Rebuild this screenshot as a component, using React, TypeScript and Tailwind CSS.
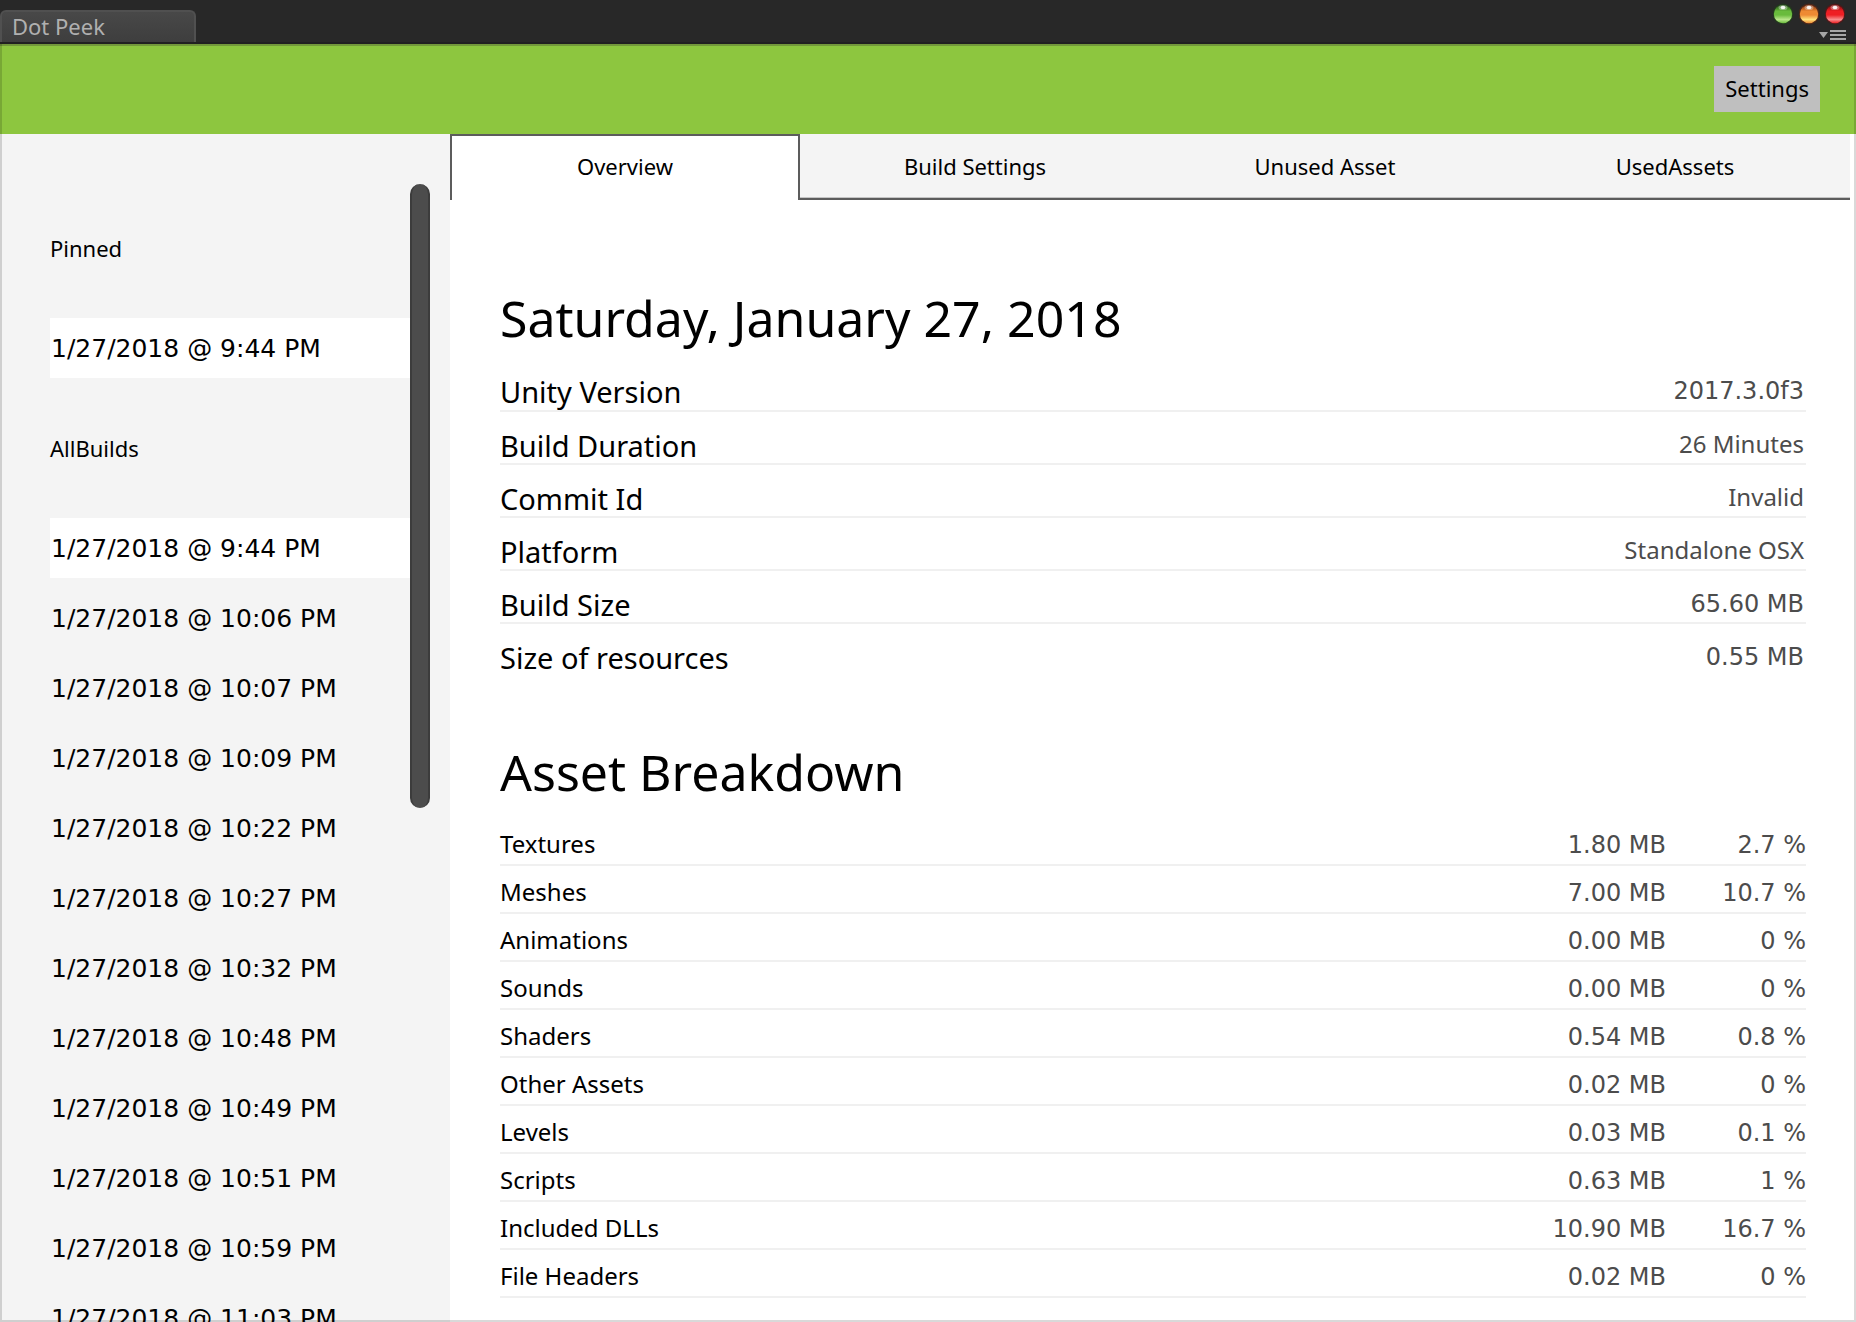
import React from "react";

const builds = ["9:44", "10:06", "10:07", "10:09", "10:22", "10:27", "10:32", "10:48", "10:49", "10:51", "10:59", "11:03"];

const tabs = ["Overview", "Build Settings", "Unused Asset", "UsedAssets"];

const info = [
  { label: "Unity Version", value: "2017.3.0f3", numeric: true },
  { label: "Build Duration", value: "26 Minutes", numeric: false },
  { label: "Commit Id", value: "Invalid", numeric: false },
  { label: "Platform", value: "Standalone OSX", numeric: false },
  { label: "Build Size", value: "65.60 MB", numeric: true },
  { label: "Size of resources", value: "0.55 MB", numeric: true },
];

const assets = [
  ["Textures", "1.80 MB", "2.7 %"],
  ["Meshes", "7.00 MB", "10.7 %"],
  ["Animations", "0.00 MB", "0 %"],
  ["Sounds", "0.00 MB", "0 %"],
  ["Shaders", "0.54 MB", "0.8 %"],
  ["Other Assets", "0.02 MB", "0 %"],
  ["Levels", "0.03 MB", "0.1 %"],
  ["Scripts", "0.63 MB", "1 %"],
  ["Included DLLs", "10.90 MB", "16.7 %"],
  ["File Headers", "0.02 MB", "0 %"],
];

function Orb({ id, rim, body, glow, label }: { id: string; rim: string; body: string; glow: string; label: string }) {
  return (
    <button type="button" aria-label={label} className="block">
      <svg width="20" height="22" viewBox="0 0 20 22" className="block">
        <defs>
          <linearGradient id={id} x1="0" y1="0" x2="0" y2="1">
            <stop offset="0" stopColor={rim} />
            <stop offset="0.35" stopColor={body} />
            <stop offset="0.55" stopColor={body} />
            <stop offset="0.8" stopColor={glow} />
            <stop offset="1" stopColor={body} />
          </linearGradient>
        </defs>
        <circle cx="10" cy="11" r="10.5" fill={rim} opacity="0.45" />
        <circle cx="10" cy="11" r="9.2" fill={`url(#${id})`} />
        <ellipse cx="10" cy="4.5" rx="4.5" ry="2.6" fill="#fff" opacity="0.35" />
        <ellipse cx="10" cy="4.5" rx="2.4" ry="1.7" fill="#fff" opacity="0.9" />
      </svg>
    </button>
  );
}

function BuildItem({ time, selected }: { time: string; selected: boolean }) {
  return (
    <li>
      <button
        type="button"
        className={`block h-[60px] w-full pt-0.5 pl-px text-left font-['DejaVu_Sans',sans-serif] text-[25px] whitespace-nowrap ${
          selected ? "bg-white" : ""
        }`}
      >
        1/27/2018 @ {time} PM
      </button>
    </li>
  );
}

export default function App() {
  return (
    <div className="relative flex h-screen flex-col overflow-hidden bg-white font-['Noto_Sans',sans-serif] text-black">
      <div className="flex h-11 shrink-0 items-end justify-between border-b-2 border-[#212121] bg-[#282828]">
        <div className="flex h-8 w-[196px] items-center rounded-t-md border-2 border-b-0 border-[#505050] bg-linear-to-b from-[#484848] to-[#3e3e3e] pb-0.5 pl-2.5 text-[22px] leading-7 text-[#b0b0b0]">
          Dot Peek
        </div>
        <div className="flex flex-col items-end gap-[5px] pr-2.5 pb-0.5">
          <div className="flex gap-1.5 pr-px">
            <Orb id="orb-min" label="Minimize" rim="#1d4a12" body="#69bb3c" glow="#b9e58a" />
            <Orb id="orb-max" label="Maximize" rim="#7a2606" body="#ee8a33" glow="#ffe27c" />
            <Orb id="orb-close" label="Close" rim="#7a0909" body="#ee1f24" glow="#f78d8d" />
          </div>
          <button type="button" aria-label="Window menu" className="block">
            <svg width="28" height="10" viewBox="0 0 28 10" className="block" fill="#a6a6a6">
              <path d="M1 2h9l-4.5 6z" />
              <path d="M12 0h16v2H12zM12 4h16v2H12zM12 8h16v2H12z" />
            </svg>
          </button>
        </div>
      </div>

      <header className="flex h-[90px] shrink-0 items-center justify-end border-t-2 border-[#73983b] bg-[#8dc63f] pr-9 pb-0.5">
        <button type="button" className="h-[46px] bg-[#bfbfbf] px-[11px] pb-0.5 text-[22px]">
          Settings
        </button>
      </header>

      <div className="flex min-h-0 flex-1">
        <aside className="flex w-[450px] shrink-0 overflow-hidden bg-[#f4f4f4] pt-[44px] pl-[50px]">
          <nav className="min-w-0 flex-1">
            <h2 className="flex h-[140px] items-center text-[22px]">Pinned</h2>
            <ul>
              <BuildItem time="9:44" selected />
            </ul>
            <h2 className="flex h-[140px] items-center text-[22px]">AllBuilds</h2>
            <ul className="flex flex-col gap-2.5">
              {builds.map((time, i) => (
                <BuildItem key={time} time={time} selected={i === 0} />
              ))}
            </ul>
          </nav>
          <div className="mt-1.5 mr-5 h-[624px] w-5 rounded-full border-x-2 border-[#3c3c3c] bg-[#4c4c4c]" />
        </aside>

        <main className="min-w-0 flex-1">
          <div role="tablist" className="mr-1.5 grid h-[66px] grid-cols-4">
            {tabs.map((tab, i) => (
              <button
                key={tab}
                type="button"
                role="tab"
                aria-selected={i === 0}
                className={`text-[22px] ${
                  i === 0
                    ? "border-2 border-b-0 border-[#5c5c5c] bg-white pb-1"
                    : "border-b-2 border-[#5c5c5c] bg-[#f4f4f4] shadow-[inset_0_-1px_0_#c4c4c4]"
                }`}
              >
                {tab}
              </button>
            ))}
          </div>

          <section className="pt-[87px] pr-[50px] pl-[50px]">
            <h1 className="h-[71px] text-[50px] leading-[62px]">Saturday, January 27, 2018</h1>
            <table className="w-full border-collapse">
              <tbody>
                {info.map(({ label, value, numeric }, i) => (
                  <tr key={label} className={`h-[53px] ${i < info.length - 1 ? "border-b-2 border-[#f0f0f0]" : ""}`}>
                    <th scope="row" className="p-0 pt-4 text-left text-[29px] leading-8 font-normal">
                      {label}
                    </th>
                    <td
                      className={`p-0 text-right text-2xl text-[#4c4c4c] ${
                        numeric ? "pt-3.5 pr-0.5 font-['DejaVu_Sans',sans-serif]" : "pt-3 pr-0.5"
                      }`}
                    >
                      {value}
                    </td>
                  </tr>
                ))}
              </tbody>
            </table>

            <h1 className="mt-[65px] h-[76px] text-[50px] leading-[62px]">Asset Breakdown</h1>
            <table className="w-full border-collapse">
              <tbody>
                {assets.map(([label, size, share]) => (
                  <tr key={label} className="h-12 border-b-2 border-[#f0f0f0]">
                    <th scope="row" className="p-0 pt-1.5 text-left text-2xl font-normal">
                      {label}
                    </th>
                    <td className="p-0 pt-2 text-right font-['DejaVu_Sans',sans-serif] text-2xl text-[#4c4c4c]">{size}</td>
                    <td className="w-[140px] p-0 pt-2 text-right font-['DejaVu_Sans',sans-serif] text-2xl text-[#4c4c4c]">
                      {share}
                    </td>
                  </tr>
                ))}
              </tbody>
            </table>
          </section>
        </main>
      </div>

      <div className="pointer-events-none absolute inset-x-0 top-11 bottom-0 border-2 border-t-0 border-black/15" />
    </div>
  );
}
